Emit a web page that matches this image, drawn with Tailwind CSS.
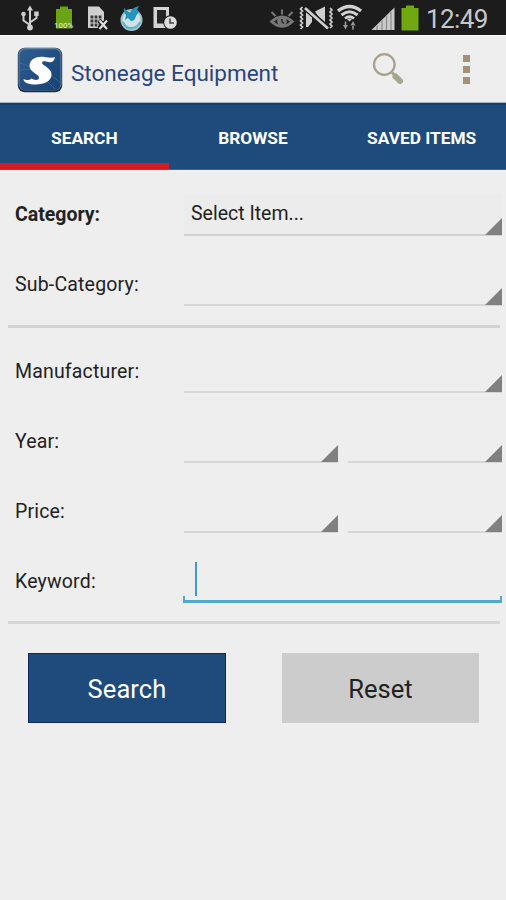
<!DOCTYPE html>
<html lang="en">
<head>
<meta charset="utf-8">
<title>Stoneage Equipment</title>
<script src="https://cdn.jsdelivr.net/npm/@tailwindcss/browser@4"></script>
</head>
<body class="w-[506px] h-[900px] overflow-hidden bg-[#eeeeee] text-[#222222] font-['Roboto',sans-serif]">
<header class="h-[35px] bg-[#1c1c1c] flex items-center justify-between">
  <svg class="w-[190px] h-[35px]" viewBox="0 0 190 35" fill="none">
    <!-- USB -->
    <g stroke="#cfcfcf" stroke-width="2"><path d="M30 9V28M30 25L23.500 20.500V14M30 22.500L36.500 18V13"/></g>
    <path d="M30 5.500L33 10.500H27Z" fill="#cfcfcf"/><circle cx="30" cy="27.500" r="2.900" fill="#cfcfcf"/><circle cx="23.500" cy="14" r="2.300" fill="#cfcfcf"/><path d="M34.200 11.500h4.500v4.500h-4.500z" fill="#cfcfcf"/>
    <!-- Battery level -->
    <path d="M60 6.500h8V9h4v19.500h-16V9h4z" fill="#6ba312"/>
    <text x="54" y="28" textLength="19.500" lengthAdjust="spacingAndGlyphs" font-size="8" font-weight="500" fill="#d5dfc4">100%</text>
    <!-- SIM -->
    <path d="M88 6.500h11l5 5.500v16H88z" fill="#cfcfcf"/><path d="M90.500 15.500h11v11h-11z" fill="#3a3a3a"/><path d="M94 15v12M98 15v12M90 19h12M90 23h12" stroke="#cfcfcf" stroke-width="1.200"/>
    <path d="M99 20.500l8 8M107 20.500l-8 8" stroke="#1c1c1c" stroke-width="4.500"/><path d="M99.500 20.500l7.500 8.500M107 20.500l-7.500 8.500" stroke="#e0e0e0" stroke-width="2.200"/>
    <!-- Globe -->
    <circle cx="131.500" cy="20" r="11" fill="#9fc3ce"/><circle cx="131.500" cy="19.500" r="8.800" fill="#cfe2e7"/>
    <path d="M124 8q3 4 6 4.500 2-5 9-6.500l-2 4 2 2-3 4q-1 5-5 5l-3-3-3 2 1-5q-3-3-2-7z" fill="#2395bd"/><path d="M123 22q3 7 9 6 6-1 8-6" stroke="#5fb2cc" stroke-width="2"/>
    <!-- Device clock -->
    <path d="M153.500 7H169v21h-15.500z" fill="#d4d4d4"/><path d="M157 10h9v13.500h-9z" fill="#262626"/>
    <circle cx="170.500" cy="22.500" r="7.300" fill="#1c1c1c"/><circle cx="170.500" cy="22.500" r="6.300" fill="#dcdcdc"/><path d="M170 18.500v4.500h4" stroke="#444" stroke-width="1.600"/>
  </svg>
  <div class="flex items-center">
  <svg class="w-[162px] h-[35px]" viewBox="264 0 162 35" fill="none">
    <!-- Eye -->
    <path d="M269.500 21.500Q282 9.500 294.500 21.500Q282 34 269.500 21.500Z" fill="#777"/><path d="M274 21.500Q282 14.500 290 21.500Q282 29 274 21.500Z" fill="#242424"/><circle cx="282" cy="21.500" r="4.800" fill="#777"/><path d="M282 19v3l2 1.500" stroke="#242424" stroke-width="1.400"/>
    <path d="M271.500 12l4 4M282 9.500v5M292.500 12l-4 4" stroke="#777" stroke-width="2"/>
    <!-- Vibrate / mute -->
    <path d="M302.500 7l-2 2 2 2-2 2 2 2-2 2 2 2-2 2 2 2-2 2 2 2-2 2M330 8l2 2-2 2 2 2-2 2 2 2-2 2 2 2-2 2 2 2-2 2" stroke="#cfcfcf" stroke-width="1.700"/>
    <path d="M306 12h6v10l-4 5h-2z M315 11.500L325 6.500V27z" fill="#cfcfcf"/><path d="M305 8L328 28" stroke="#1c1c1c" stroke-width="5"/><path d="M305 8L328 28.500" stroke="#cfcfcf" stroke-width="2.600"/>
    <!-- Wi-Fi -->
    <g stroke="#d2d2d2"><path d="M338 11Q349.500 2 361 11" stroke-width="3.400"/><path d="M341.500 15Q349.500 8.500 357.500 15" stroke-width="3"/><path d="M345 18.500Q349.500 14.800 354 18.500" stroke-width="2.800"/></g>
    <path d="M346.500 18.500h6l-3 3z" fill="#d2d2d2"/>
    <path d="M343 25h5l-2.500 4.500zM350.500 25.500h5L353 21zM344.700 21.500h1.600V26h-1.600zM352.200 25h1.600v4.500h-1.600z" fill="#999"/>
    <!-- Signal -->
    <path d="M371.500 30L394.500 7.500V30Z" fill="#c9c9c9"/><path d="M377 25.500v4.500M382 20.500v9.500M386.500 16v14M391 12v18" stroke="#8c8c8c" stroke-width="1.200"/>
    <!-- Battery -->
    <path d="M406 5.500h8v2.500h4.500v22.500h-17V8h4.500z" fill="#70a80f"/>
  </svg>
  <div class="w-[80px] text-[26px] leading-[35px] pt-[3px] text-[#c8c8c8] whitespace-nowrap"><span class="tracking-[-0.6px]">12:49</span></div>
  </div>
</header>

<div class="h-[68px] flex items-center bg-[#eeeeee] border-t border-b border-t-[#f8f8f8] border-b-[#a9b0ba] pl-[17px]">
  <svg class="w-[46px] h-[46px] mt-px" viewBox="0 0 46 46">
    <defs><linearGradient id="g" x1="0" y1="0" x2="1" y2="1"><stop offset="0" stop-color="#2e5d90"/><stop offset="1" stop-color="#174173"/></linearGradient></defs>
    <rect x=".8" y=".8" width="44.400" height="44.400" rx="7" fill="#182c45"/>
    <rect x="1.500" y="1" width="43" height="42.500" rx="6.500" fill="#6683a2"/>
    <rect x="2.500" y="2.200" width="41" height="41" rx="6" fill="url(#g)"/>
    <path d="M3 16L14 20M3 23L13 22M32 27L43 35M28 32L38 42" stroke="#4a73a0" stroke-width="1" opacity=".7"/>
    <path d="M38 10C37.500 14 35 16 31.500 15C28 14 25.500 14 25 15.500C24.500 18.500 34.500 20.500 34.500 27.500C34.500 34 27.500 37.500 19 37.500C12 37.500 6.500 36 6.500 32C9 33.500 12 33.500 14.500 31.500C16.500 33 21.500 34 22 31C22.500 27 12.500 25.500 12.500 19C12.500 12 20 9 27.500 10C31.500 10.500 35 11.500 38 10Z" fill="#fff"/>
  </svg>
  <h1 class="ml-[8px] mt-[8px] w-[290px] text-[22.500px] leading-[28px] text-[#28457f] whitespace-nowrap"><span>Stoneage Equipment</span></h1>
  <svg class="ml-[8px] w-[36px] h-[36px]" viewBox="0 0 36 36"><circle cx="15.300" cy="13.500" r="10.300" fill="none" stroke="#aaa18c" stroke-width="2.300"/><path d="M22.500 21l4 4" stroke="#aaa18c" stroke-width="2.600"/><path d="M26.500 25.500l4.500 4.500" stroke="#a5a68a" stroke-width="6" stroke-linecap="round"/></svg>
  <div class="ml-[58px] flex flex-col gap-[4px]"><i class="size-[7px] bg-[#a29376]"></i><i class="size-[7px] bg-[#a29376]"></i><i class="size-[7px] bg-[#a29376]"></i></div>
</div>

<nav class="h-[67px] grid grid-cols-3 grid-rows-[64px] bg-[#1e4a7c] border-t-2 border-t-[#123f70] border-b border-b-[#c72c3c] text-white font-bold text-[17.300px] text-center leading-[66px]">
  <div class="h-[64px] border-b-[6px] border-[#d51c24]"><span>SEARCH</span></div>
  <div><span>BROWSE</span></div>
  <div><span>SAVED ITEMS</span></div>
</nav>

<main class="text-[19.500px] leading-[24px] whitespace-nowrap">
  <section class="h-[158px] ml-[8px] mr-[6px] border-b-[3px] border-[#d2d2d2]">
    <div class="h-[66px] flex items-end pl-[7px]">
      <label class="w-[169px] shrink-0 pb-[9px] font-bold"><span>Category:</span></label>
      <div class="w-[318px] h-[42px] shrink-0 flex justify-between items-end border-b-2 border-[#d0d0d0] bg-[#ececec]"><span class="pl-[7px] pb-[8px] self-end">Select Item...</span><svg class="w-[17px] h-[17px] -mb-px" viewBox="0 0 17 17"><path d="M0 17L17 0V17Z" fill="#808080"/></svg></div>
    </div>
    <div class="h-[70px] flex items-end pl-[7px]">
      <label class="w-[169px] shrink-0 pb-[9px]"><span class="tracking-[0.18px]">Sub-Category:</span></label>
      <div class="w-[318px] h-[42px] shrink-0 flex justify-end items-end border-b-2 border-[#d6d6d6]"><svg class="w-[17px] h-[17px] -mb-px" viewBox="0 0 17 17"><path d="M0 17L17 0V17Z" fill="#808080"/></svg></div>
    </div>
  </section>
  <section class="h-[296px] ml-[8px] mr-[6px] border-b-[3px] border-[#d6d6d6]">
    <div class="h-[65px] flex items-end pl-[7px]">
      <label class="w-[169px] shrink-0 pb-[9px]"><span class="tracking-[0.18px]">Manufacturer:</span></label>
      <div class="w-[318px] h-[42px] shrink-0 flex justify-end items-end border-b-2 border-[#d6d6d6]"><svg class="w-[17px] h-[17px] -mb-px" viewBox="0 0 17 17"><path d="M0 17L17 0V17Z" fill="#808080"/></svg></div>
    </div>
    <div class="h-[70px] flex items-end pl-[7px]">
      <label class="w-[169px] shrink-0 pb-[9px]"><span class="tracking-[0.18px]">Year:</span></label>
      <div class="w-[154px] h-[42px] shrink-0 flex justify-end items-end border-b-2 border-[#d6d6d6]"><svg class="w-[17px] h-[17px] -mb-px" viewBox="0 0 17 17"><path d="M0 17L17 0V17Z" fill="#808080"/></svg></div>
      <div class="ml-[10px] w-[154px] h-[42px] shrink-0 flex justify-end items-end border-b-2 border-[#d6d6d6]"><svg class="w-[17px] h-[17px] -mb-px" viewBox="0 0 17 17"><path d="M0 17L17 0V17Z" fill="#808080"/></svg></div>
    </div>
    <div class="h-[70px] flex items-end pl-[7px]">
      <label class="w-[169px] shrink-0 pb-[9px]"><span class="tracking-[0.18px]">Price:</span></label>
      <div class="w-[154px] h-[42px] shrink-0 flex justify-end items-end border-b-2 border-[#d6d6d6]"><svg class="w-[17px] h-[17px] -mb-px" viewBox="0 0 17 17"><path d="M0 17L17 0V17Z" fill="#808080"/></svg></div>
      <div class="ml-[10px] w-[154px] h-[42px] shrink-0 flex justify-end items-end border-b-2 border-[#d6d6d6]"><svg class="w-[17px] h-[17px] -mb-px" viewBox="0 0 17 17"><path d="M0 17L17 0V17Z" fill="#808080"/></svg></div>
    </div>
    <div class="h-[70px] flex items-end pl-[7px]">
      <label class="w-[168px] shrink-0 pb-[9px]"><span class="tracking-[0.18px]">Keyword:</span></label>
      <div class="w-[319px] shrink-0"><div class="ml-[12px] w-[2px] h-[34px] bg-[#3b9ae0]"></div><div class="h-[7px] border-x-2 border-b-[3px] border-[#51a8cc]"></div></div>
    </div>
  </section>
  <div class="flex gap-[56px] pt-[29px] pl-[28px] text-[25.500px] text-center leading-[71px]">
    <button class="w-[198px] h-[70px] bg-[#1e4a7c] border border-[#0c2b6b] text-white leading-[70px]"><span class="tracking-[0.1px]">Search</span></button>
    <button class="w-[197px] h-[70px] bg-[#cccccc] leading-[72px]"><span>Reset</span></button>
  </div>
</main>
</body>
</html>
